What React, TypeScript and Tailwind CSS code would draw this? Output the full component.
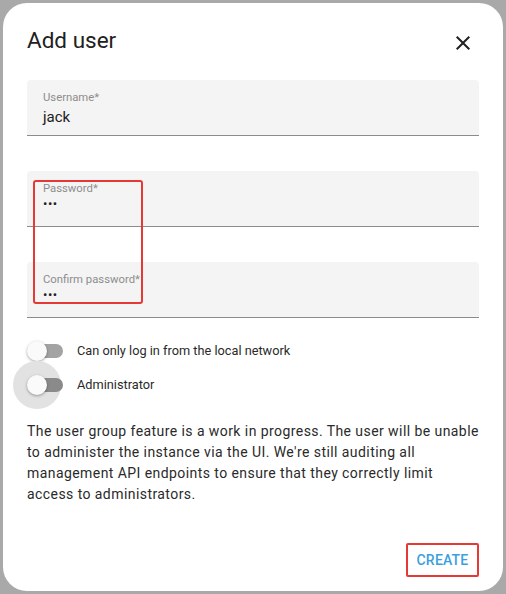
import React from "react";

function Field({ label, value, dots }: { label: string; value: string; dots?: boolean }) {
  return (
    <div className="h-[56px] rounded-t-[4px] bg-[#f4f4f4] border-b border-[#8c8c8c] px-4 pt-[10px]">
      <div className="text-[11.3px] leading-[16px] text-[#8d8d8d]">{label}</div>
      {dots ? (
        <div className="text-[13px] leading-[20px] text-[#212121] tracking-[0.5px] mt-[-3px]">{value}</div>
      ) : (
        <div className="text-[15px] leading-[20px] text-[#212121] mt-[1px]">{value}</div>
      )}
    </div>
  );
}

function Switch({ halo, track }: { halo?: boolean; track: string }) {
  return (
    <div className="relative w-[36px] h-[20px] shrink-0">
      {halo && <div className="absolute left-[-14px] top-[-14px] w-[48px] h-[48px] rounded-full bg-[#e2e2e2]" />}
      <div className={`absolute left-[2px] top-[3px] w-[34px] h-[14px] rounded-full ${track}`} />
      <div className="absolute left-0 top-0 w-[20px] h-[20px] rounded-full bg-[#fafafa] shadow-[0_1px_3px_rgba(0,0,0,0.35)]" />
    </div>
  );
}

export default function App() {
  return (
    <div className="w-[506px] h-[594px] bg-[#a9a9a9] p-[3px] font-['Roboto',sans-serif] overflow-hidden">
      <div className="relative h-[588px] w-[500px] bg-white rounded-[24px] px-6 flex flex-col">
        <div className="flex items-start justify-between pt-[21px] h-[77px]">
          <h2 className="text-[22.5px] leading-[32px] text-[#212121] font-normal">Add user</h2>
          <svg width="24" height="24" viewBox="0 0 24 24" className="mt-[7px] mr-[4px]">
            <path
              fill="#212121"
              d="M19,6.41L17.59,5L12,10.59L6.41,5L5,6.41L10.59,12L5,17.59L6.41,19L12,13.41L17.59,19L19,17.59L13.41,12L19,6.41Z"
            />
          </svg>
        </div>
        <div className="flex flex-col gap-[35px]">
          <Field label="Username*" value="jack" />
          <Field label="Password*" value="•••" dots />
          <Field label="Confirm password*" value="•••" dots />
        </div>
        <div className="mt-[23px] flex flex-col">
          <div className="flex items-center h-[20px] gap-[14px]">
            <Switch track="bg-[#a3a3a3]" />
            <span className="text-[12.75px] text-[#2a2a2a]">Can only log in from the local network</span>
          </div>
          <div className="flex items-center h-[20px] gap-[14px] mt-[14px]">
            <Switch halo track="bg-[#8a8a8a]" />
            <span className="text-[12.75px] text-[#2a2a2a]">Administrator</span>
          </div>
        </div>
        <p className="mt-[26px] text-[14px] leading-[21px] tracking-[0.43px] text-[#2a2a2a]">
          The user group feature is a work in progress. The user will be unable to administer the instance via the UI. We're still auditing all management API endpoints to ensure that they correctly limit access to administrators.
        </p>
        <div className="mt-auto mb-[14px] flex justify-end">
          <div className="h-[34px] w-[73px] border-2 border-[#e53935] rounded-[2px] flex items-center justify-center">
            <span className="text-[14px] font-medium tracking-[0.2px] text-[#3a9fe0]">CREATE</span>
          </div>
        </div>
        <div className="absolute left-[30px] top-[177px] w-[110px] h-[124px] border-2 border-[#e53935] rounded-[3px]" />
      </div>
    </div>
  );
}
